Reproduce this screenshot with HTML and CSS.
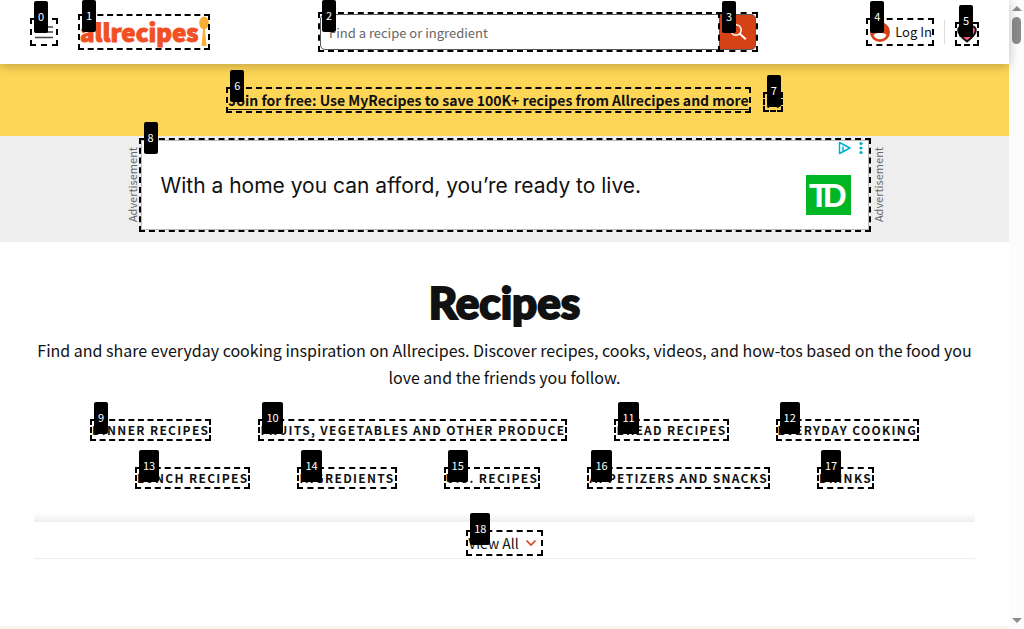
FILE: index.html
```html
<!DOCTYPE html>
<html lang="en">
<head>
<meta charset="utf-8">
<title>Recipes</title>
<meta name="viewport" content="width=device-width, initial-scale=1">
<link rel="stylesheet" href="styles.css">
</head>
<body>
<div class="page">
  <header class="header">
    <button class="mark menu" type="button" aria-label="Menu">
      <svg width="24" height="24" viewBox="0 0 24 24" stroke="#444" stroke-width="1.500"><path d="M3 7h18M3 12h18M3 17.500h18"/></svg>
      <span class="tag">0</span>
    </button>
    <a class="mark logo" href="#">
      <span class="logo-text">allrecipes</span>
      <svg class="spoon" width="10" height="32" viewBox="0 0 10 32" fill="#f9ae33"><ellipse cx="5" cy="7" rx="4.800" ry="6.500"/><path d="M4.200 12h1.600L7.500 30h-5z"/></svg>
      <span class="tag tag-edge">1</span>
    </a>
    <form class="search">
      <label class="mark field">
        <input type="text" placeholder="Find a recipe or ingredient" aria-label="Find a recipe or ingredient">
        <span class="tag tag-edge">2</span>
      </label>
      <button class="mark search-btn" type="button" aria-label="Search">
        <svg width="20" height="20" viewBox="0 0 20 20" fill="none" stroke="#fff"><circle cx="8" cy="8" r="5.200" stroke-width="1.500"/><path d="M11.800 11.800l6 5.400" stroke-width="2"/></svg>
        <span class="tag tag-edge">3</span>
      </button>
    </form>
    <div class="account">
      <a class="mark login" href="#">
        <svg width="24" height="24" viewBox="0 0 24 24"><circle cx="12" cy="12" r="10" fill="#d54215"/><circle cx="12" cy="8" r="3.500" fill="#fff"/><path d="M5.500 15c2-2 4.300-2 6.500-2s4.500 0 6.500 2c-1.200 3-3.800 4.200-6.500 4.200S6.700 18 5.500 15z" fill="#fff"/></svg>
        <span>Log In</span>
        <span class="tag">4</span>
      </a>
      <span class="divider"></span>
      <a class="mark saves" href="#" aria-label="Saved recipes">
        <svg width="20" height="20" viewBox="0 0 20 20"><path d="M10 17.500C5.500 14 1.200 10.500 1.200 6.500 1.200 1.500 7.500.500 10 4.500c2.500-4 8.800-3 8.800 2 0 4-4.300 7.500-8.800 11z" fill="#ff5a7d" stroke="#111" stroke-width="2"/></svg>
        <span class="tag">5</span>
      </a>
    </div>
  </header>

  <div class="banner">
    <a class="mark join" href="#">Join for free: Use MyRecipes to save 100K+ recipes from Allrecipes and more<span class="tag">6</span></a>
    <button class="mark close" type="button" aria-label="Close">
      <svg width="16" height="16" viewBox="0 0 16 16" stroke="#111" stroke-width="2"><path d="M2.500 2.500l11 11M13.500 2.500l-11 11"/></svg>
      <span class="tag">7</span>
    </button>
  </div>

  <div class="ad-strip">
    <span class="ad-label">Advertisement</span>
    <a class="mark ad" href="#">
      <span class="ad-text">With a home you can afford, you’re ready to live.</span>
      <svg class="td" width="45" height="40" viewBox="0 0 45 40"><rect width="45" height="40" fill="#00b624"/><g fill="#fff" font-family="Liberation Sans, sans-serif" font-weight="700" font-size="33"><text x="3" y="32">T</text><text x="17" y="32">D</text></g></svg>
      <svg class="ad-choices" width="28" height="14" viewBox="0 0 28 14"><path d="M1.500 1.500v11L12 7z" fill="none" stroke="#00aecd" stroke-width="1.500" stroke-linejoin="round"/><path d="M5 5.500v5" stroke="#00aecd" stroke-width="1.500"/><g fill="#00aecd"><circle cx="23" cy="2.500" r="1.600"/><circle cx="23" cy="7" r="1.600"/><circle cx="23" cy="11.500" r="1.600"/></g></svg>
      <span class="tag">8</span>
    </a>
    <span class="ad-label">Advertisement</span>
  </div>

  <main class="content">
    <h1 class="title">Recipes</h1>
    <p class="intro">Find and share everyday cooking inspiration on Allrecipes. Discover recipes, cooks, videos, and how-tos based on the food you love and the friends you follow.</p>
    <nav class="topics">
      <a class="mark" href="#">Dinner Recipes<span class="tag">9</span></a>
      <a class="mark" href="#">Fruits, Vegetables and Other Produce<span class="tag">10</span></a>
      <a class="mark" href="#">Bread Recipes<span class="tag">11</span></a>
      <a class="mark" href="#">Everyday Cooking<span class="tag">12</span></a>
      <a class="mark" href="#">Lunch Recipes<span class="tag">13</span></a>
      <a class="mark" href="#">Ingredients<span class="tag">14</span></a>
      <a class="mark" href="#">U.S. Recipes<span class="tag">15</span></a>
      <a class="mark" href="#">Appetizers and Snacks<span class="tag">16</span></a>
      <a class="mark" href="#">Drinks<span class="tag">17</span></a>
    </nav>
    <div class="more">
      <button class="mark view-all" type="button">
        <span>View All</span>
        <svg width="12" height="8" viewBox="0 0 12 8" fill="none" stroke="#d54215" stroke-width="1.600"><path d="M1.500 1.500L6 6l4.500-4.500"/></svg>
        <span class="tag">18</span>
      </button>
    </div>
  </main>
  <div class="next-section"></div>
</div>
<div class="scrollbar" aria-hidden="true">
  <span class="arrow-up"></span>
  <span class="thumb"></span>
  <span class="arrow-down"></span>
</div>
</body>
</html>
```
FILE: styles.css
```css
* {
  box-sizing: border-box;
}

body {
  margin: 0;
  min-height: 100vh;
  display: grid;
  grid-template-columns: 1fr 15px;
  background: #fff;
  color: #111;
  font-family: "Noto Sans CJK SC", "Noto Sans", sans-serif;
  font-size: 14px;
}

a {
  color: inherit;
  text-decoration: none;
}

button {
  padding: 0;
  border: 0;
  background: none;
  color: inherit;
  font: inherit;
}

svg {
  display: block;
  flex: none;
}

.page {
  display: flex;
  flex-direction: column;
  min-width: 0;
}

/* Numbered dashed outlines */
.mark {
  position: relative;
}

.mark::after {
  content: "";
  position: absolute;
  inset: -2px;
  border: 2px dashed #000;
  pointer-events: none;
}

.tag {
  position: absolute;
  z-index: 3;
  top: -19px;
  left: 2px;
  height: 32px;
  padding: 0 4px;
  border-radius: 2px;
  background: #000;
  color: #fff;
  font-size: 11px;
  font-weight: 400;
  line-height: 30px;
  letter-spacing: 0;
}

.tag-edge {
  top: -14px;
}

.logo .tag-edge {
  top: -16px;
}

/* Header */
.header {
  position: relative;
  z-index: 2;
  display: flex;
  align-items: center;
  height: 64px;
  padding: 0 32px;
  background: #fff;
  box-shadow: 0 2px 10px rgba(0, 0, 0, 0.25);
}

.menu {
  width: 24px;
  height: 24px;
}

.logo {
  display: flex;
  width: 128px;
  height: 32px;
  margin-left: 24px;
  color: #f15025;
}

.logo-text {
  flex: 1;
  font-size: 24px;
  font-weight: 900;
  line-height: 32px;
  -webkit-text-stroke: 1px #f15025;
}

.search {
  display: flex;
  flex: 0 1 436px;
  margin-left: 112px;
}

.field {
  flex: 1;
}

.field input {
  display: block;
  width: 100%;
  height: 36px;
  padding: 0 8px;
  border: 1px solid #595959;
  border-radius: 5px 0 0 5px;
  color: #111;
  font: inherit;
  font-size: 13px;
}

.field input::placeholder {
  color: #666;
}

.search-btn {
  display: grid;
  place-items: center;
  width: 36px;
  height: 36px;
  border: 1px solid #595959;
  border-left: 0;
  border-radius: 0 5px 5px 0;
  background: #d54215;
}

.search-btn::after {
  inset: -3px -3px -3px -2px;
}

.account {
  display: flex;
  align-items: center;
  margin-left: auto;
}

.login {
  display: flex;
  gap: 3px;
  font-size: 13px;
  line-height: 24px;
}

.divider {
  width: 1px;
  height: 24px;
  margin: 0 12px;
  background: #ddd;
}

.saves {
  margin-top: 4px;
}

/* Banner */
.banner {
  display: flex;
  align-items: center;
  justify-content: center;
  gap: 16px;
  min-height: 72px;
  background: #fdd657;
}

.join {
  font-weight: 700;
  line-height: 22px;
  text-decoration: underline;
  text-underline-offset: 3px;
}

.close {
  margin-top: 4px;
}

/* Advertisement */
.ad-strip {
  display: flex;
  align-items: flex-start;
  justify-content: center;
  gap: 1px;
  padding: 4px 0 12px;
  background: #eee;
}

.ad-label {
  align-self: center;
  width: 16px;
  color: #666;
  font-size: 11px;
  line-height: 16px;
  writing-mode: vertical-rl;
  transform: rotate(180deg);
}

.ad {
  display: flex;
  flex: 0 1 728px;
  align-items: center;
  justify-content: space-between;
  min-height: 90px;
  padding: 0 17px 0 19px;
  border: 1px solid #bbb;
  background: #fff;
}

.ad::after {
  inset: -3px;
}

.ad-text {
  font-family: Inter, sans-serif;
  font-size: 21px;
  font-weight: 400;
}

.td {
  margin-top: 20px;
}

.ad-choices {
  position: absolute;
  top: 0;
  right: 2px;
}

/* Main content */
.content {
  padding: 38px 34px 0;
  text-align: center;
}

.title {
  margin: 0;
  font-family: Lato, sans-serif;
  font-size: 44px;
  font-weight: 900;
  line-height: 44px;
  -webkit-text-stroke: 2px #111;
}

.intro {
  margin: 13px 0 0;
  font-size: 16px;
  line-height: 27px;
}

.topics {
  display: flex;
  flex-wrap: wrap;
  justify-content: center;
  gap: 30px 51px;
  margin-top: 30px;
  font-size: 12px;
  font-weight: 700;
  line-height: 18px;
  letter-spacing: 0.11em;
  text-transform: uppercase;
}

.more {
  display: flex;
  justify-content: center;
  margin-top: 26px;
  padding: 19px 0 4px;
  border-bottom: 1px solid #eee;
  background: linear-gradient(to top, #eee, #fff) top / 100% 9px no-repeat;
}

.view-all {
  display: flex;
  align-items: center;
  gap: 6px;
  padding-right: 4px;
  line-height: 22px;
}

.next-section {
  height: 3px;
  margin-top: auto;
  background: #f5f5ea;
}

/* Scrollbar */
.scrollbar {
  display: flex;
  flex-direction: column;
  align-items: center;
  gap: 6px;
  padding: 6px 0;
  background: #fcfcfc;
}

.arrow-up,
.arrow-down {
  border: 5px solid transparent;
  border-top: 0;
  border-bottom: 5px solid #8b8b8b;
}

.arrow-down {
  margin-top: auto;
  border-top: 5px solid #8b8b8b;
  border-bottom: 0;
}

.thumb {
  width: 9px;
  height: 27px;
  border-radius: 5px;
  background: #8b8b8b;
}
```
